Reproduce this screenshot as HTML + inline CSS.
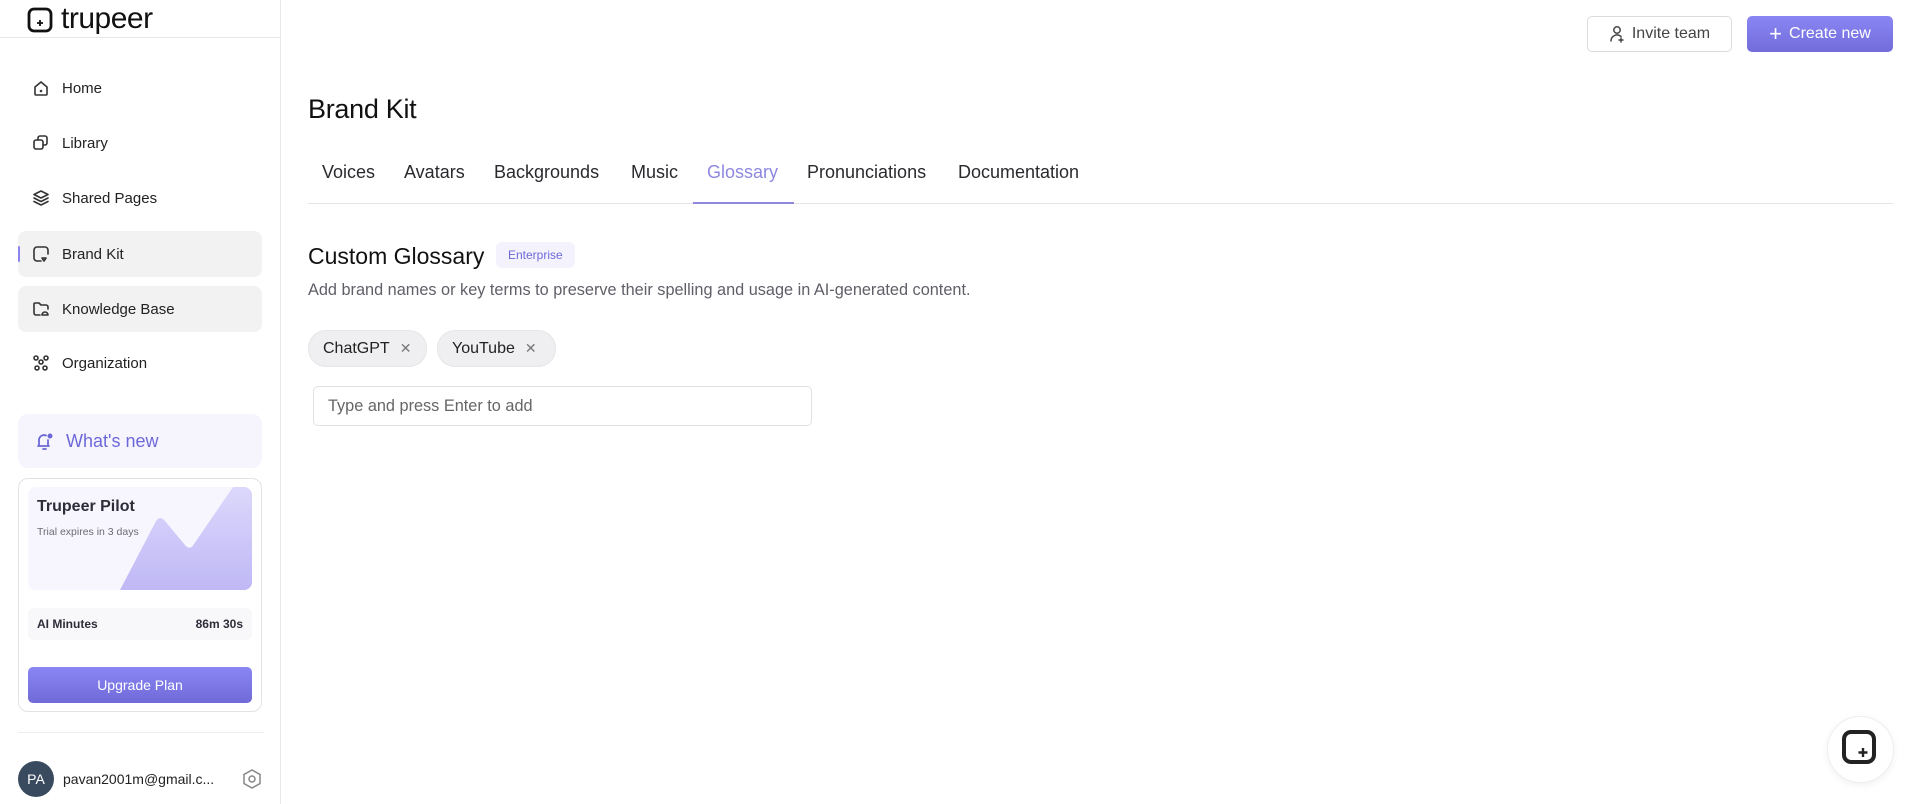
<!DOCTYPE html>
<html><head><meta charset="utf-8"><style>
*{box-sizing:border-box;margin:0;padding:0}
body{width:1920px;height:804px;overflow:hidden;background:#fff;font-family:"Liberation Sans",sans-serif;color:#1f1f23;position:relative}
.abs{position:absolute}
.sb{position:absolute;left:0;top:0;width:281px;height:804px;border-right:1px solid #e8e8ea}
.nav{position:absolute;left:18px;width:244px;height:46px;border-radius:8px;display:flex;align-items:center;padding-left:14px;font-size:15px;color:#222}
.nav svg{width:18px;height:18px;margin-right:12px;fill:none;stroke:#333;stroke-width:1.6;stroke-linecap:round;stroke-linejoin:round}
.tab{position:absolute;top:162px;font-size:18px;color:#2a2a2e}
.chip{position:absolute;top:330px;width:119px;height:37px;border-radius:18px;background:#efeff1;border:1px solid #e6e6e8;font-size:16px;color:#222;display:flex;align-items:center;padding-left:14px}
.chip span{margin-left:10px;color:#777;font-size:14px}
</style></head><body>
<div class="sb">
  <div class="abs" style="left:0;top:37px;width:280px;height:1px;background:#e6e6e8"></div>
  <svg class="abs" style="left:27px;top:7px" width="26" height="26" viewBox="0 0 26 26"><rect x="2" y="2" width="22" height="22" rx="5" fill="none" stroke="#111" stroke-width="2.8"/><path d="M13 13v6M10 16h6" stroke="#111" stroke-width="1.8"/></svg>
  <div class="abs" style="left:61px;top:2px;font-size:30px;font-weight:500;letter-spacing:-0.5px;color:#111">trupeer</div>

  <div class="nav" style="top:65px"><svg viewBox="0 0 18 18"><path d="M3 8l6-5 6 5v7a1 1 0 0 1-1 1H4a1 1 0 0 1-1-1z"/><circle cx="9" cy="12" r=".5"/></svg>Home</div>
  <div class="nav" style="top:120px"><svg viewBox="0 0 18 18"><rect x="2" y="6" width="9" height="9" rx="2"/><path d="M6 6V4a2 2 0 0 1 2-2h5a2 2 0 0 1 2 2v5a2 2 0 0 1-2 2h-2"/></svg>Library</div>
  <div class="nav" style="top:175px"><svg viewBox="0 0 18 18"><path d="M9 2l7 3.5-7 3.5-7-3.5z"/><path d="M2 9l7 3.5L16 9M2 12.5L9 16l7-3.5"/></svg>Shared Pages</div>
  <div class="nav" style="top:231px;background:#f2f2f3"><svg viewBox="0 0 18 18"><path d="M9 16H5a3 3 0 0 1-3-3V5a3 3 0 0 1 3-3h8a3 3 0 0 1 3 3v4"/><path d="M12 16l-2-3h4z"/></svg>Brand Kit</div>
  <div class="abs" style="left:18px;top:246px;width:2px;height:16px;background:#8b84f0;border-radius:1px"></div>
  <div class="nav" style="top:286px;background:#f2f2f3"><svg viewBox="0 0 18 18"><path d="M8 15H4a2 2 0 0 1-2-2V4a1 1 0 0 1 1-1h4l2 2h5a2 2 0 0 1 2 2v2"/><path d="M10 15a3 3 0 0 1 6 0z"/></svg>Knowledge Base</div>
  <div class="nav" style="top:340px"><svg viewBox="0 0 18 18"><circle cx="4" cy="4" r="2"/><circle cx="14" cy="4" r="2"/><circle cx="9" cy="8" r="2"/><circle cx="5" cy="14" r="2"/><circle cx="13" cy="14" r="2"/></svg>Organization</div>

  <div class="abs" style="left:18px;top:414px;width:244px;height:54px;border-radius:10px;background:#f6f5fe;display:flex;align-items:center;padding-left:16px;font-size:18px;color:#6d68d8">
    <svg width="22" height="22" viewBox="0 0 22 22" style="margin-right:10px" fill="none" stroke="#6d68d8" stroke-width="1.8" stroke-linecap="round"><path d="M4 16h11M5 16V10a5 5 0 0 1 7-4.5M14 10v6M9 19h3"/><circle cx="16" cy="6" r="2.5" fill="#6d68d8" stroke="none"/></svg>What's new</div>

  <div class="abs" style="left:18px;top:478px;width:244px;height:234px;border:1px solid #e3e3e6;border-radius:10px"></div>
  <div class="abs" style="left:28px;top:487px;width:224px;height:103px;border-radius:8px;background:#f7f6fe;overflow:hidden">
    <svg class="abs" style="left:0;top:0" width="224" height="103"><defs><linearGradient id="g" x1="0" y1="0" x2="0" y2="1"><stop offset="0" stop-color="#dcd8fb"/><stop offset="1" stop-color="#bfb8f6"/></linearGradient></defs><path d="M92 103L128 34Q132 28 137 34L157 58Q162 64 166 57L205 0H224V103Z" fill="url(#g)"/></svg>
    <div class="abs" style="left:9px;top:11px;font-size:16px;font-weight:bold;color:#2d2d3a">Trupeer Pilot</div>
    <div class="abs" style="left:9px;top:39px;font-size:10.5px;color:#6b6b78">Trial expires in 3 days</div>
  </div>
  <div class="abs" style="left:28px;top:608px;width:224px;height:32px;border-radius:6px;background:#f8f8fb;display:flex;justify-content:space-between;align-items:center;padding:0 9px;font-size:12px;font-weight:bold;color:#2d2d3a"><span>AI Minutes</span><span>86m 30s</span></div>
  <div class="abs" style="left:28px;top:667px;width:224px;height:36px;border-radius:5px;background:linear-gradient(#8a86f3,#6f6ad8);color:#fff;font-size:14px;display:flex;align-items:center;justify-content:center">Upgrade Plan</div>

  <div class="abs" style="left:18px;top:732px;width:246px;height:1px;background:#eeeef0"></div>
  <div class="abs" style="left:18px;top:761px;width:36px;height:36px;border-radius:50%;background:#3a4a5e;color:#fff;font-size:14px;display:flex;align-items:center;justify-content:center">PA</div>
  <div class="abs" style="left:63px;top:771px;font-size:14px;color:#222">pavan2001m@gmail.c...</div>
  <svg class="abs" style="left:241px;top:768px" width="22" height="22" viewBox="0 0 22 22" fill="none" stroke="#888" stroke-width="1.5"><path d="M11 2l8 4.5v9L11 20l-8-4.5v-9z"/><circle cx="11" cy="11" r="3"/></svg>
</div>

<div class="abs" style="left:1587px;top:16px;width:145px;height:36px;border:1px solid #dcdce0;border-radius:5px;display:flex;align-items:center;justify-content:center;font-size:16px;color:#444">
  <svg width="16" height="18" viewBox="0 0 16 18" style="margin-right:7px" fill="none" stroke="#444" stroke-width="1.5" stroke-linecap="round"><circle cx="8" cy="5" r="3.2"/><path d="M2 16a6 6 0 0 1 10-4.5M10 15h4M12 13v4"/></svg>Invite team</div>
<div class="abs" style="left:1747px;top:16px;width:146px;height:36px;border-radius:5px;background:linear-gradient(#8a86f3,#716cda);display:flex;align-items:center;justify-content:center;font-size:16px;color:#fff">
  <span style="font-size:22px;margin-right:7px;font-weight:300;line-height:1">+</span>Create new</div>

<div class="abs" style="left:308px;top:94px;font-size:27px;color:#111;letter-spacing:-0.3px">Brand Kit</div>
<div class="tab" style="left:322px">Voices</div>
<div class="tab" style="left:404px">Avatars</div>
<div class="tab" style="left:494px">Backgrounds</div>
<div class="tab" style="left:631px">Music</div>
<div class="tab" style="left:707px;color:#8e88e0">Glossary</div>
<div class="tab" style="left:807px">Pronunciations</div>
<div class="tab" style="left:958px">Documentation</div>
<div class="abs" style="left:308px;top:203px;width:1585px;height:1px;background:#e5e5e8"></div>
<div class="abs" style="left:693px;top:202px;width:101px;height:2px;background:#8e88e0"></div>

<div class="abs" style="left:308px;top:243px;font-size:23px;color:#111">Custom Glossary</div>
<div class="abs" style="left:496px;top:242px;height:26px;padding:0 12px;border-radius:6px;background:#f4f3fd;color:#6d68d8;font-size:12px;line-height:26px">Enterprise</div>
<div class="abs" style="left:308px;top:281px;font-size:16.3px;color:#5f5f68">Add brand names or key terms to preserve their spelling and usage in AI-generated content.</div>

<div class="chip" style="left:308px">ChatGPT<span>✕</span></div>
<div class="chip" style="left:437px">YouTube<span>✕</span></div>

<div class="abs" style="left:313px;top:386px;width:499px;height:40px;border:1px solid #e2e2e5;border-radius:5px;font-size:16.3px;color:#666;padding-left:14px;line-height:38px">Type and press Enter to add</div>

<div class="abs" style="left:1827px;top:716px;width:67px;height:67px;border-radius:50%;background:#fff;border:1px solid #eee;box-shadow:0 2px 8px rgba(0,0,0,.06)"></div>
<svg class="abs" style="left:1835px;top:724px" width="50" height="50" viewBox="0 0 50 50"><rect x="9" y="8" width="30" height="30" rx="7" fill="none" stroke="#222" stroke-width="4"/><path d="M28 24v9M23.5 28.5h9" stroke="#222" stroke-width="2.4"/></svg>
</body></html>
